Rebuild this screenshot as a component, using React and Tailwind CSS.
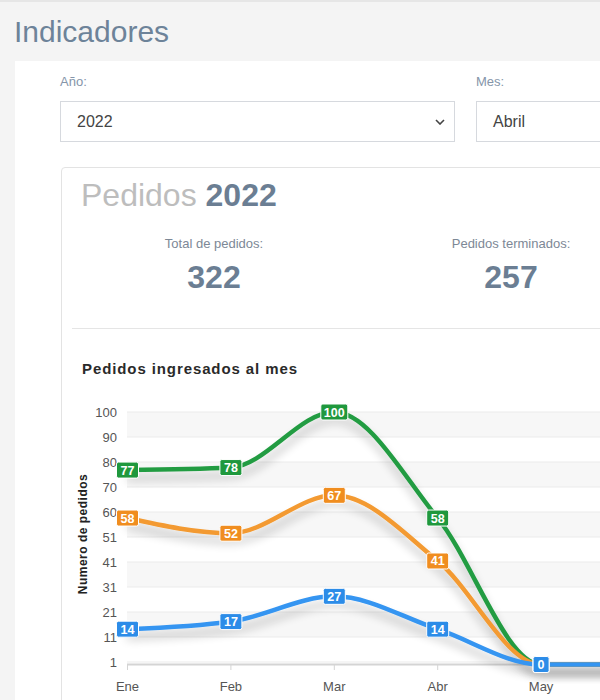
import React from 'react';

const MONTHS = ['Ene', 'Feb', 'Mar', 'Abr', 'May', 'Jun'];
const SERIES = [
  { name: 'total', line: '#249c43', box: '#1f983d', data: [77, 78, 100, 58, 0, 0] },
  { name: 'proceso', line: '#f39a30', box: '#f08d1f', data: [58, 52, 67, 41, 0, 0] },
  { name: 'terminados', line: '#3595f1', box: '#2c8ce8', data: [14, 17, 27, 14, 0, 0] },
];
const TICKS = [100, 90, 80, 70, 60, 51, 41, 31, 21, 11, 1];

const xAt = (i) => 127.5 + 103.4 * i;
const yAt = (v) => 662 - ((v - 1) * 250) / 99;

// monotone cubic, same idea as d3 curveMonotoneX
const monotonePath = (pts) => {
  const n = pts.length;
  const sign = (v) => (v < 0 ? -1 : 1);
  const t = new Array(n).fill(0);
  for (let i = 1; i < n - 1; i++) {
    const h0 = pts[i][0] - pts[i - 1][0];
    const h1 = pts[i + 1][0] - pts[i][0];
    const s0 = (pts[i][1] - pts[i - 1][1]) / h0;
    const s1 = (pts[i + 1][1] - pts[i][1]) / h1;
    const p = (s0 * h1 + s1 * h0) / (h0 + h1);
    t[i] = (sign(s0) + sign(s1)) * Math.min(Math.abs(s0), Math.abs(s1), 0.5 * Math.abs(p)) || 0;
  }
  const h = pts[1][0] - pts[0][0];
  t[0] = ((3 * (pts[1][1] - pts[0][1])) / h - t[1]) / 2;
  const hl = pts[n - 1][0] - pts[n - 2][0];
  t[n - 1] = ((3 * (pts[n - 1][1] - pts[n - 2][1])) / hl - t[n - 2]) / 2;
  let d = `M${pts[0][0]},${pts[0][1]}`;
  for (let i = 0; i < n - 1; i++) {
    const dx = (pts[i + 1][0] - pts[i][0]) / 3;
    d += ` C${pts[i][0] + dx},${pts[i][1] + dx * t[i]} ${pts[i + 1][0] - dx},${pts[i + 1][1] - dx * t[i + 1]} ${pts[i + 1][0]},${pts[i + 1][1]}`;
  }
  return d;
};

function Chevron() {
  return (
    <svg width="10" height="6" viewBox="0 0 10 6" className="shrink-0">
      <path d="M1 1 L5 5 L9 1" fill="none" stroke="#444" strokeWidth="1.6" />
    </svg>
  );
}

function Select({ label, value, chevron }) {
  return (
    <div className="w-[395px] shrink-0">
      <div className="text-[13px] leading-[18px] text-[#8595a9] mb-[10px]">{label}</div>
      <div className="h-[41px] border border-[#d6d9de] flex items-center justify-between pl-[16px] pr-[9px] text-[16px] text-[#444]">
        <span>{value}</span>
        {chevron && <Chevron />}
      </div>
    </div>
  );
}

function Chart() {
  return (
    <svg width="540" height="330" viewBox="62 379 540 330" className="block">
      <defs>
        <filter id="shadow" filterUnits="userSpaceOnUse" x="62" y="379" width="540" height="330">
          <feGaussianBlur in="SourceAlpha" stdDeviation="5" />
          <feOffset dx="1" dy="8" result="b" />
          <feComponentTransfer>
            <feFuncA type="linear" slope="0.25" />
          </feComponentTransfer>
          <feMerge>
            <feMergeNode />
            <feMergeNode in="SourceGraphic" />
          </feMerge>
        </filter>
      </defs>

      {/* bands */}
      {[0, 2, 4, 6, 8].map((k) => (
        <rect key={k} x="127" y={412 + 25 * k} width="480" height="25" fill="#f7f7f7" />
      ))}
      {TICKS.map((v, k) => (
        <line key={v} x1="127" x2="607" y1={412 + 25 * k} y2={412 + 25 * k} stroke="#ebebeb" strokeWidth="1" />
      ))}
      {TICKS.map((v, k) => (
        <text key={v} x="117" y={416.5 + 25 * k} textAnchor="end" fontSize="13" fill="#555" fontFamily="'Liberation Sans', Arial, sans-serif">
          {v}
        </text>
      ))}

      {/* x axis */}
      <line x1="127" x2="607" y1="664.5" y2="664.5" stroke="#d4d4d4" strokeWidth="2" />
      {MONTHS.slice(0, 5).map((m, i) => (
        <g key={m}>
          <line x1={xAt(i)} x2={xAt(i)} y1="664" y2="670" stroke="#d4d4d4" strokeWidth="1" />
          <text x={xAt(i)} y="691" textAnchor="middle" fontSize="13" fill="#555" fontFamily="'Liberation Sans', Arial, sans-serif">
            {m}
          </text>
        </g>
      ))}

      <text
        transform="translate(87 534) rotate(-90)"
        textAnchor="middle"
        fontSize="12"
        fontWeight="bold"
        letterSpacing="0.5"
        fill="#222"
        fontFamily="'Liberation Sans', Arial, sans-serif"
      >
        Numero de pedidos
      </text>

      {SERIES.map((s) => (
        <path
          key={s.name}
          d={monotonePath(s.data.map((v, i) => [xAt(i), yAt(v)]))}
          fill="none"
          stroke={s.line}
          strokeWidth="4.5"
          strokeLinecap="round"
          filter="url(#shadow)"
        />
      ))}

      {SERIES.map((s) =>
        s.data.slice(0, 5).map((v, i) => {
          const w = String(v).length === 1 ? 16 : String(v).length === 2 ? 22 : 27;
          const cx = xAt(i);
          const cy = yAt(v);
          return (
            <g key={s.name + i}>
              <rect x={cx - w / 2} y={cy - 8} width={w} height="16" rx="2" fill={s.box} stroke="#fff" strokeWidth="1" />
              <text x={cx} y={cy + 4.5} textAnchor="middle" fontSize="12.5" fontWeight="bold" fill="#fff" fontFamily="'Liberation Sans', Arial, sans-serif">
                {v}
              </text>
            </g>
          );
        })
      )}
    </svg>
  );
}

export default function App() {
  return (
    <div className="w-[600px] h-[700px] overflow-hidden bg-[#f4f4f4] border-t-2 border-[#e6e6e6] font-['Liberation_Sans',Arial,sans-serif]">
      <h1 className="pt-[12px] pl-[14px] text-[30px] leading-[36px] text-[#6d8399] mb-[11px]">Indicadores</h1>

      <div className="ml-[15px] w-[900px] h-[700px] bg-white pl-[45px] pt-3">
        <div className="flex gap-[21px]">
          <Select label="Año:" value="2022" chevron />
          <Select label="Mes:" value="Abril" chevron />
        </div>

        <div className="mt-[25px] ml-px w-[640px] h-[600px] border border-[#e3e3e3] rounded-tl-[4px]">
          <h2 className="pt-[9px] pl-[19px] text-[32px] leading-[36px]">
            <span className="text-[#bdbdbd]">Pedidos </span>
            <span className="font-bold text-[#6b7e93]">2022</span>
          </h2>

          <div className="flex gap-[13px] pl-[10px] mt-[22px] text-center">
            <div className="w-[284px]">
              <div className="text-[13px] leading-[18px] text-[#7d8896]">Total de pedidos:</div>
              <div className="mt-[6px] text-[32px] leading-[36px] font-bold text-[#6b7e93]">322</div>
            </div>
            <div className="w-[284px]">
              <div className="text-[13px] leading-[18px] text-[#7d8896]">Pedidos terminados:</div>
              <div className="mt-[6px] text-[32px] leading-[36px] font-bold text-[#6b7e93]">257</div>
            </div>
          </div>

          <div className="mt-[33px] ml-[10px] h-px bg-[#e5e5e5]" />

          <div className="mt-[30px] pl-[20px] text-[15px] leading-[20px] font-bold tracking-[0.9px] text-[#2a2a2a]">
            Pedidos ingresados al mes
          </div>

          <Chart />
        </div>
      </div>
    </div>
  );
}
